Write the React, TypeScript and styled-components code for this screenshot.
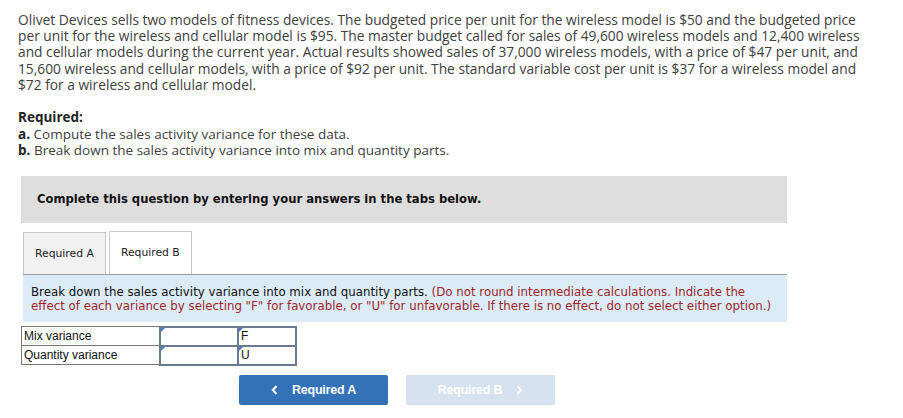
import React from 'react'
import styled, { createGlobalStyle } from 'styled-components'

const GlobalStyle = createGlobalStyle`
  html, body {
    margin: 0;
    padding: 0;
    background: #fff;
  }
`

const Page = styled.div`
  width: 903px;
  height: 418px;
  overflow: hidden;
  padding: 12px 0 0 18px;
  box-sizing: border-box;
  font-family: 'Open Sans', Lato, sans-serif;
  color: #404040;
`

const Problem = styled.p`
  margin: 0;
  width: 845px;
  font-size: 13.75px;
  line-height: 16.2px;
`

const Required = styled.div`
  margin-top: 16px;
  font-size: 13.5px;
  line-height: 16.5px;
`

const RequiredTitle = styled.div`
  font-weight: 700;
  color: #222;
`

const Part = styled.div`
  b {
    font-weight: 700;
    color: #222;
  }
`

const Banner = styled.div`
  margin: 17px 0 0 3px;
  width: 766px;
  height: 47px;
  background: #dedede;
  display: flex;
  align-items: center;
  padding-left: 16px;
  box-sizing: border-box;
  font-family: Verdana, 'DejaVu Sans', sans-serif;
  font-weight: 700;
  font-size: 11.6px;
  color: #111;
`

const TabArea = styled.div`
  margin: 8px 0 0 5px;
  width: 764px;
`

const TabRow = styled.div`
  display: flex;
  gap: 3px;
  align-items: flex-end;
`

const Tab = styled.div<{ $active?: boolean }>`
  height: ${(p) => (p.$active ? 43 : 42)}px;
  padding: 0 11px;
  display: flex;
  align-items: center;
  box-sizing: border-box;
  border: 1px solid #c8c8c8;
  border-bottom: none;
  background: ${(p) => (p.$active ? '#fff' : '#f1f1f1')};
  font-family: 'DejaVu Sans', Verdana, sans-serif;
  font-size: 10.8px;
  color: #222;
`

const Instructions = styled.div`
  background: #dcebf8;
  border-top: 1px solid #9a9a9a;
  padding: 10px 8px 9px 8px;
  font-family: 'DejaVu Sans', Verdana, sans-serif;
  font-size: 11.8px;
  line-height: 14px;
  color: #111;
`

const Note = styled.span`
  color: #a0242a;
`

const Table = styled.table`
  margin: 4px 0 0 3px;
  border-collapse: collapse;
  font-family: 'Liberation Sans', Arial, sans-serif;
  font-size: 12px;
  color: #111;
`

const LabelCell = styled.td`
  width: 133px;
  height: 18px;
  padding: 0 2px;
  border: 1px solid #777;
`

const InputCell = styled.td<{ $w: number }>`
  position: relative;
  width: ${(p) => p.$w}px;
  height: 16px;
  padding: 0 2px;
  border: 2px solid #6a7a92;
  background: #fff;
  &::before {
    content: '';
    position: absolute;
    top: 0;
    left: 0;
    border-top: 4px solid #4a7fc4;
    border-right: 4px solid transparent;
  }
`

const Nav = styled.div`
  display: flex;
  gap: 18px;
  margin: 9px 0 0 221px;
`

const NavButton = styled.div<{ $disabled?: boolean }>`
  width: 149px;
  height: 30px;
  border-radius: 2px;
  display: flex;
  align-items: center;
  justify-content: center;
  gap: 14px;
  background: ${(p) => (p.$disabled ? '#d6e2ef' : '#3472b8')};
  color: #fff;
  font-family: 'Liberation Sans', Arial, sans-serif;
  font-weight: 700;
  font-size: 12.5px;
  letter-spacing: -0.2px;
`

const Chevron = ({ dir }: { dir: 'left' | 'right' }) => (
  <svg width="7" height="10" viewBox="0 0 7 10">
    <path
      d={dir === 'left' ? 'M5.5 1 L1.8 5 L5.5 9' : 'M1.5 1 L5.2 5 L1.5 9'}
      fill="none"
      stroke="#fff"
      strokeWidth="2"
    />
  </svg>
)

export default function App() {
  return (
    <>
      <GlobalStyle />
      <Page>
        <Problem>
          Olivet Devices sells two models of fitness devices. The budgeted price per unit for
          the wireless model is $50 and the budgeted price per unit for the wireless and
          cellular model is $95. The master budget called for sales of 49,600 wireless models
          and 12,400 wireless and cellular models during the current year. Actual results
          showed sales of 37,000 wireless models, with a price of $47 per unit, and 15,600
          wireless and cellular models, with a price of $92 per unit. The standard variable
          cost per unit is $37 for a wireless model and $72 for a wireless and cellular model.
        </Problem>
        <Required>
          <RequiredTitle>Required:</RequiredTitle>
          <Part>
            <b>a.</b> Compute the sales activity variance for these data.
          </Part>
          <Part>
            <b>b.</b> Break down the sales activity variance into mix and quantity parts.
          </Part>
        </Required>
        <Banner>Complete this question by entering your answers in the tabs below.</Banner>
        <TabArea>
          <TabRow>
            <Tab>Required A</Tab>
            <Tab $active>Required B</Tab>
          </TabRow>
          <Instructions>
            Break down the sales activity variance into mix and quantity parts.{' '}
            <Note>
              (Do not round intermediate calculations. Indicate the effect of each variance by
              selecting "F" for favorable, or "U" for unfavorable. If there is no effect, do
              not select either option.)
            </Note>
          </Instructions>
        </TabArea>
        <Table>
          <tbody>
            <tr>
              <LabelCell>Mix variance</LabelCell>
              <InputCell $w={72} />
              <InputCell $w={52}>F</InputCell>
            </tr>
            <tr>
              <LabelCell>Quantity variance</LabelCell>
              <InputCell $w={72} />
              <InputCell $w={52}>U</InputCell>
            </tr>
          </tbody>
        </Table>
        <Nav>
          <NavButton>
            <Chevron dir="left" />
            Required A
          </NavButton>
          <NavButton $disabled>
            Required B
            <Chevron dir="right" />
          </NavButton>
        </Nav>
      </Page>
    </>
  )
}
